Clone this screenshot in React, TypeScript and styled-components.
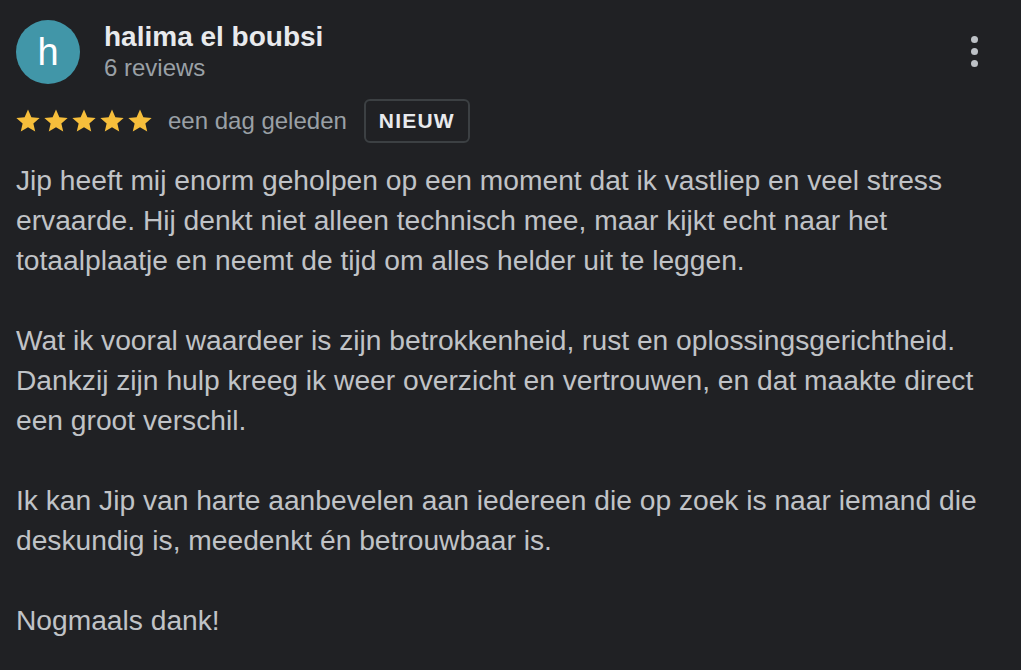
import styled, { createGlobalStyle } from 'styled-components';

const GlobalStyle = createGlobalStyle`
  html, body {
    margin: 0;
    padding: 0;
    background: #202124;
  }
  body {
    font-family: "Liberation Sans", Arial, sans-serif;
  }
`;

const Card = styled.div`
  width: 1021px;
  height: 670px;
  box-sizing: border-box;
  padding: 20px 16px 0 16px;
  background: #202124;
  overflow: hidden;
`;

const Header = styled.div`
  display: flex;
  align-items: flex-start;
`;

const Avatar = styled.div`
  width: 64px;
  height: 64px;
  border-radius: 50%;
  background: #4196a8;
  color: #ffffff;
  font-size: 38px;
  display: flex;
  align-items: center;
  justify-content: center;
  flex-shrink: 0;
`;

const Who = styled.div`
  display: flex;
  flex-direction: column;
  margin-left: 24px;
  flex: 1;
`;

const Name = styled.div`
  color: #e8eaed;
  font-size: 28px;
  font-weight: 700;
  line-height: 32px;
  margin-top: 1px;
`;

const Sub = styled.div`
  color: #9aa0a6;
  font-size: 24px;
  line-height: 30px;
`;

const MoreButton = styled.div`
  display: flex;
  flex-direction: column;
  gap: 5px;
  padding-top: 16px;
  margin-right: 27px;
`;

const Dot = styled.span`
  width: 7px;
  height: 7px;
  border-radius: 50%;
  background: #bdc1c6;
`;

const Meta = styled.div`
  display: flex;
  align-items: center;
  margin-top: 15px;
`;

const Stars = styled.div`
  display: flex;
  margin-left: -2px;
`;

const Time = styled.span`
  color: #9aa0a6;
  font-size: 24px;
  margin-left: 14px;
`;

const Badge = styled.span`
  margin-left: 17px;
  border: 2px solid #3c4043;
  border-radius: 6px;
  padding: 0 13px;
  height: 40px;
  display: flex;
  align-items: center;
  color: #e8eaed;
  font-size: 21px;
  font-weight: 700;
  letter-spacing: 1.2px;
`;

const Body = styled.div`
  margin-top: 17px;
  color: #c0c3c7;
  font-size: 28.2px;
  line-height: 40px;
`;

const Para = styled.p`
  margin: 0 0 40px 0;
  white-space: nowrap;
`;

const Star = () => (
  <svg width="28" height="28" viewBox="0 0 24 24">
    <path
      fill="#f6be3b"
      d="M12 2.2l2.9 6.6 7.1.6-5.4 4.7 1.6 7-6.2-3.7-6.2 3.7 1.6-7L2 9.4l7.1-.6z"
    />
  </svg>
);

const paragraphs = [
  [
    'Jip heeft mij enorm geholpen op een moment dat ik vastliep en veel stress',
    'ervaarde. Hij denkt niet alleen technisch mee, maar kijkt echt naar het',
    'totaalplaatje en neemt de tijd om alles helder uit te leggen.',
  ],
  [
    'Wat ik vooral waardeer is zijn betrokkenheid, rust en oplossingsgerichtheid.',
    'Dankzij zijn hulp kreeg ik weer overzicht en vertrouwen, en dat maakte direct',
    'een groot verschil.',
  ],
  [
    'Ik kan Jip van harte aanbevelen aan iedereen die op zoek is naar iemand die',
    'deskundig is, meedenkt én betrouwbaar is.',
  ],
  ['Nogmaals dank!'],
];

export default function App() {
  return (
    <>
      <GlobalStyle />
      <Card>
        <Header>
          <Avatar>h</Avatar>
          <Who>
            <Name>halima el boubsi</Name>
            <Sub>6 reviews</Sub>
          </Who>
          <MoreButton>
            <Dot />
            <Dot />
            <Dot />
          </MoreButton>
        </Header>
        <Meta>
          <Stars>
            {[0, 1, 2, 3, 4].map(i => (
              <Star key={i} />
            ))}
          </Stars>
          <Time>een dag geleden</Time>
          <Badge>NIEUW</Badge>
        </Meta>
        <Body>
          {paragraphs.map((lines, i) => (
            <Para key={i}>
              {lines.map((line, j) => (
                <span key={j}>
                  {line}
                  {j < lines.length - 1 && <br />}
                </span>
              ))}
            </Para>
          ))}
        </Body>
      </Card>
    </>
  );
}
